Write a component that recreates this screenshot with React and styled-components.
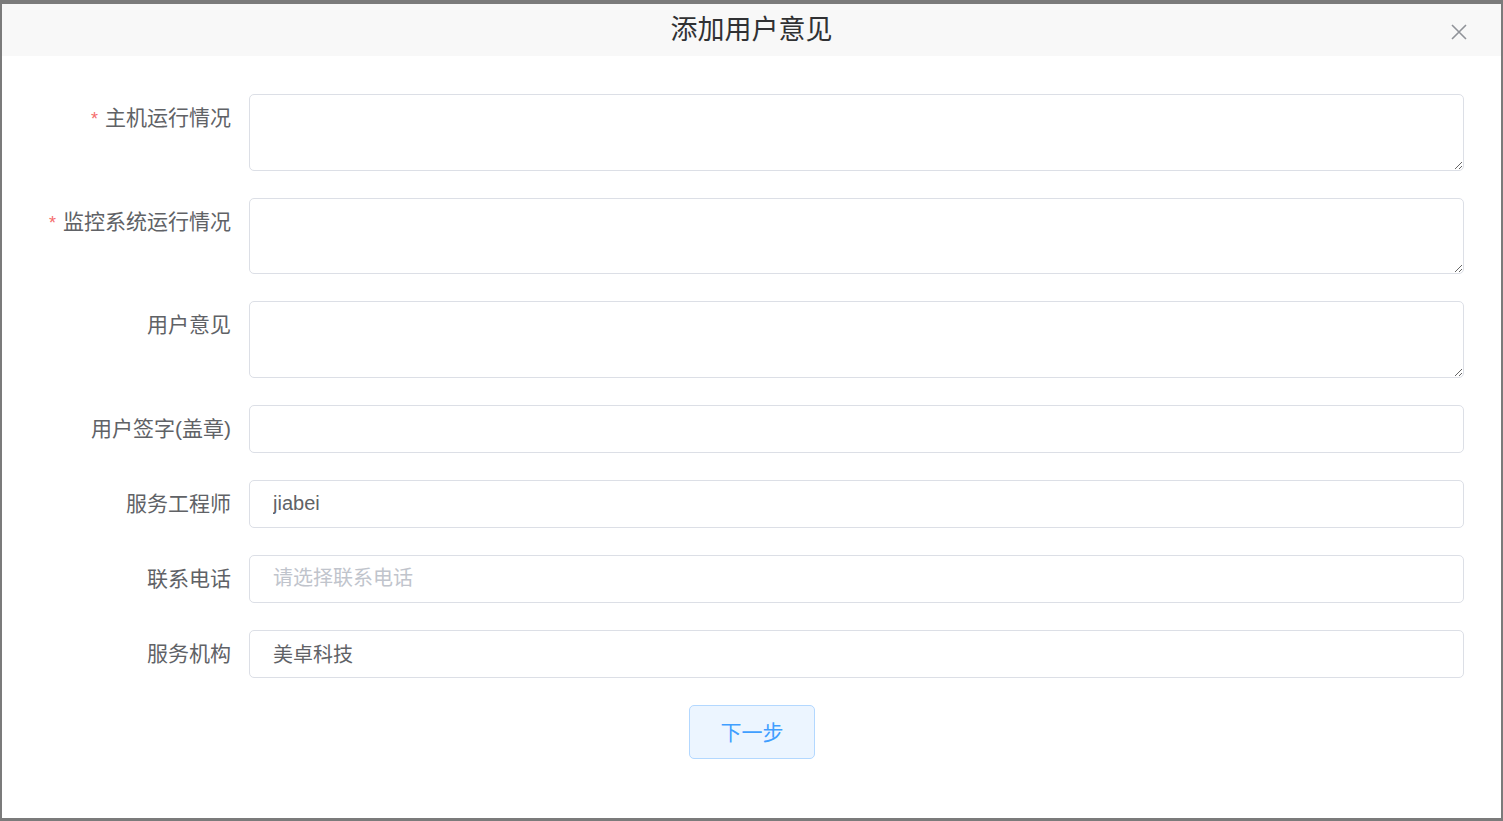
import styled, { createGlobalStyle } from 'styled-components';

const GlobalStyle = createGlobalStyle`
    html, body {
        margin: 0;
        padding: 0;
        background: #7b7b7b;
        font-family: "Liberation Sans", "Noto Sans CJK SC", sans-serif;
    }
    * {
        box-sizing: border-box;
    }
`;

const Overlay = styled.div`
    width: 1503px;
    height: 821px;
    padding: 4px 2px 3px 2px;
    background: #7b7b7b;
    display: flex;
`;

const Dialog = styled.div`
    flex: 1;
    background: #fff;
    display: flex;
    flex-direction: column;
`;

const Header = styled.div`
    position: relative;
    height: 52px;
    background: #f8f8f8;
    display: flex;
    align-items: center;
    justify-content: center;
`;

const Title = styled.h2`
    margin: 0;
    font-size: 27px;
    font-weight: 400;
    color: #303133;
    line-height: 52px;
`;

const Close = styled.button`
    position: absolute;
    right: 33px;
    top: 19px;
    width: 18px;
    height: 18px;
    padding: 0;
    border: 0;
    background: none;
    cursor: pointer;
    display: flex;
`;

const Form = styled.form`
    padding: 38px 37px 59px 0;
    display: flex;
    flex-direction: column;
    gap: 27px;
`;

const Row = styled.div`
    display: grid;
    grid-template-columns: 229px 1fr;
    column-gap: 18px;
    align-items: start;
`;

const Label = styled.label`
    text-align: right;
    font-size: 21px;
    line-height: 48px;
    color: #606266;
    white-space: nowrap;

    &::before {
        content: ${p => (p.$required ? '"*"' : 'none')};
        color: #f56c6c;
        margin-right: 7px;
        font-size: 18px;
    }
`;

const TextArea = styled.textarea`
    display: block;
    width: 100%;
    height: 76.67px;
    padding: 8px 23px;
    border: 1px solid #dcdfe6;
    border-radius: 5px;
    font-family: inherit;
    font-size: 20px;
    color: #606266;
    resize: vertical;
    outline: none;
`;

const Input = styled.input`
    display: block;
    width: 100%;
    height: 48px;
    padding: 0 23px 1px;
    border: 1px solid #dcdfe6;
    border-radius: 5px;
    font-family: inherit;
    font-size: 20px;
    color: #606266;
    outline: none;

    &::placeholder {
        color: #c0c4cc;
    }
`;

const Actions = styled.div`
    display: flex;
    justify-content: center;
    padding-left: 38px;
`;

const NextButton = styled.button`
    width: 126px;
    height: 54px;
    padding: 0 0 2px;
    border: 1px solid #b3d8ff;
    border-radius: 5px;
    background: #ecf5ff;
    color: #409eff;
    font-family: inherit;
    font-size: 21px;
    cursor: pointer;
`;

const fields = [
    { label: '主机运行情况', required: true, type: 'textarea' },
    { label: '监控系统运行情况', required: true, type: 'textarea' },
    { label: '用户意见', type: 'textarea' },
    { label: '用户签字(盖章)', type: 'input' },
    { label: '服务工程师', type: 'input', value: 'jiabei' },
    { label: '联系电话', type: 'input', placeholder: '请选择联系电话' },
    { label: '服务机构', type: 'input', value: '美卓科技' },
];

function App() {
    return (
        <>
            <GlobalStyle />
            <Overlay>
                <Dialog>
                    <Header>
                        <Title>添加用户意见</Title>
                        <Close aria-label="关闭">
                            <svg width="18" height="18" viewBox="0 0 18 18">
                                <path d="M2 2L16 16M16 2L2 16" stroke="#909399" strokeWidth="1.6" />
                            </svg>
                        </Close>
                    </Header>
                    <Form onSubmit={e => e.preventDefault()}>
                        {fields.map(field => (
                            <Row key={field.label}>
                                <Label $required={field.required}>{field.label}</Label>
                                {field.type === 'textarea'
                                    ? <TextArea />
                                    : <Input defaultValue={field.value} placeholder={field.placeholder} />}
                            </Row>
                        ))}
                        <Actions>
                            <NextButton type="button">下一步</NextButton>
                        </Actions>
                    </Form>
                </Dialog>
            </Overlay>
        </>
    );
}

export default App;
